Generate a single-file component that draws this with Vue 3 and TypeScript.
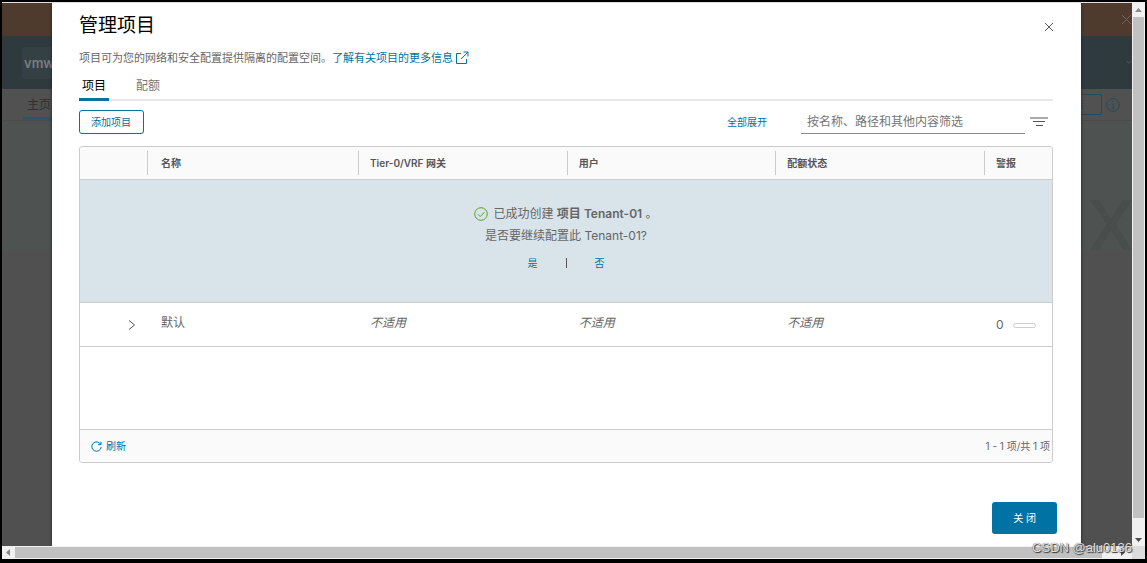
<script setup lang="ts">
import { ref } from 'vue'

interface Project {
  name: string
  gateway: string
  users: string
  quota: string
  alarms: number
}

const columns: string[] = ['名称', 'Tier-0/VRF 网关', '用户', '配额状态', '警报']
const projects: Project[] = [
  { name: '默认', gateway: '不适用', users: '不适用', quota: '不适用', alarms: 0 },
]
const tabs: string[] = ['项目', '配额']
const activeTab = ref<string>('项目')
const filterText = ref<string>('')
</script>

<template>
  <div class="screen">
    <div class="stage">
      <div class="backdrop" aria-hidden="true">
        <div class="banner">
          <svg class="banner-x" viewBox="0 0 12 12"><path d="M1 1l10 10M11 1L1 11" /></svg>
        </div>
        <div class="topbar">
          <span class="brand">vmw</span>
          <svg class="caret" viewBox="0 0 8 6"><path d="M1 1l3 3 3-3" /></svg>
        </div>
        <div class="nav">
          <span class="nav-tab">主页</span>
          <div class="nav-side">
            <span class="ghost">服务</span>
            <svg class="info" viewBox="0 0 14 14">
              <circle cx="7" cy="7" r="6.3" />
              <path d="M5.6 6h1.6v4M5.4 10.2h3.4M6.4 3.5h1.2" />
            </svg>
          </div>
        </div>
        <div class="hero">
          <svg class="hero-x" viewBox="0 0 42 50"><path d="M0 0h9l12 19L33 0h9L26 24l16 26h-9L21 30 9 50H0l17-26z" /></svg>
        </div>
      </div>

      <section class="modal" role="dialog" aria-labelledby="dlg-title">
        <header class="modal-head">
          <h1 id="dlg-title">管理项目</h1>
          <button class="icon-btn close" type="button" aria-label="关闭对话框">
            <svg width="10" height="10" viewBox="0 0 10 10"><path d="M1 1l8 8M9 1L1 9" /></svg>
          </button>
        </header>

        <p class="intro">
          <span>项目可为您的网络和安全配置提供隔离的配置空间。</span>
          <a href="#">了解有关项目的更多信息<svg width="14" height="14" viewBox="0 0 14 14"><path d="M6 2.5H1.5v10h10V8M8.5 1h4.5v4.5M13 1L6 8" /></svg></a>
        </p>

        <nav class="tabs" role="tablist">
          <button
            v-for="tab in tabs"
            :key="tab"
            type="button"
            role="tab"
            :class="['tab', { active: tab === activeTab }]"
            :aria-selected="tab === activeTab"
            @click="activeTab = tab"
          >{{ tab }}</button>
        </nav>

        <div class="tools">
          <button class="add" type="button">添加项目</button>
          <div class="tools-right">
            <button class="link" type="button">全部展开</button>
            <input v-model="filterText" class="filter" type="text" aria-label="筛选" placeholder="按名称、路径和其他内容筛选" />
            <button class="icon-btn funnel" type="button" aria-label="筛选选项">
              <svg width="18" height="10" viewBox="0 0 18 10"><path d="M0 1h18M3 4.5h12M6 8.5h7" /></svg>
            </button>
          </div>
        </div>

        <div class="grid">
          <table>
            <colgroup>
              <col class="c-exp" /><col class="c-name" /><col /><col /><col /><col class="c-alarm" />
            </colgroup>
            <thead>
              <tr>
                <td></td>
                <th v-for="c in columns" :key="c" scope="col"><span>{{ c }}</span></th>
              </tr>
            </thead>
            <tbody>
              <tr class="notice">
                <td colspan="6">
                  <div class="line">
                    <svg width="14" height="14" viewBox="0 0 14 14"><circle cx="7" cy="7" r="6.3" /><path d="M3.8 7.2l2.4 2.4 4.2-4.4" /></svg>
                    <span>已成功创建 <b>项目 Tenant-01</b> 。</span>
                  </div>
                  <div class="line">是否要继续配置此 Tenant-01?</div>
                  <div class="choices">
                    <button class="link" type="button">是</button>
                    <i></i>
                    <button class="link" type="button">否</button>
                  </div>
                </td>
              </tr>
              <tr v-for="p in projects" :key="p.name" class="row">
                <td class="exp">
                  <button class="icon-btn" type="button" aria-label="展开">
                    <svg width="8" height="12" viewBox="0 0 8 12"><path d="M1 1.5l5.5 4.5L1 10.5" /></svg>
                  </button>
                </td>
                <td class="name">{{ p.name }}</td>
                <td><em>{{ p.gateway }}</em></td>
                <td><em>{{ p.users }}</em></td>
                <td><em>{{ p.quota }}</em></td>
                <td class="alarm-cell"><div class="alarm">{{ p.alarms }}<span class="pill"></span></div></td>
              </tr>
            </tbody>
          </table>
          <footer class="grid-foot">
            <button class="link refresh" type="button">
              <svg width="11" height="11" viewBox="0 0 11 11"><path d="M9.7 3.4A4.7 4.7 0 1 0 10.2 6M10 .8v2.8H7.2" /></svg>刷新
            </button>
            <span>1 - 1 项/共 1 项</span>
          </footer>
        </div>

        <footer class="modal-foot">
          <button class="primary" type="button">关 闭</button>
        </footer>
      </section>
    </div>

    <div class="bar vertical">
      <svg class="arrow" viewBox="0 0 7 4"><path d="M0 4L3.5 0 7 4z" fill="#8a8a8a" /></svg>
      <div class="thumb"></div>
      <svg class="arrow" viewBox="0 0 7 4"><path d="M0 0h7L3.5 4z" fill="#505050" /></svg>
    </div>
    <div class="bar horizontal">
      <svg class="arrow" viewBox="0 0 4 7"><path d="M4 0v7L0 3.5z" fill="#8a8a8a" /></svg>
      <div class="thumb"></div>
      <svg class="arrow" viewBox="0 0 4 7"><path d="M0 0l4 3.5L0 7z" fill="#505050" /></svg>
    </div>
    <div class="corner"></div>
    <div class="watermark">CSDN @alu0136</div>
  </div>
</template>

<style>
body {
  margin: 0;
  background: #000;
}
</style>

<style scoped>
.screen {
  position: relative;
  box-sizing: border-box;
  display: grid;
  grid-template-columns: 1fr 13px;
  grid-template-rows: 1fr 13px;
  min-height: 100vh;
  padding: 2px 2px 4px;
  background: #000;
  color: #666;
  font-family: Inter, "Noto Sans CJK SC", sans-serif;
  font-size: 12px;
  line-height: 16px;
}
button {
  margin: 0;
  padding: 0;
  border: 0;
  background: none;
  font: inherit;
  color: inherit;
  cursor: pointer;
}
svg {
  flex: none;
  fill: none;
  stroke: currentColor;
}
.stage {
  position: relative;
  overflow: hidden;
  border-top: 1px solid #dedede;
  background: #505050;
}
.backdrop {
  position: absolute;
  inset: 0;
}
.banner {
  display: flex;
  align-items: center;
  justify-content: flex-end;
  height: 33px;
  background: #4e3b2e;
}
.banner-x {
  width: 11px;
  height: 11px;
  color: #706a66;
}
.topbar {
  display: flex;
  align-items: center;
  justify-content: space-between;
  height: 53px;
  padding-left: 20px;
  background: #2f3a3e;
}
.brand {
  width: 60px;
  padding: 8px 2px;
  border-radius: 3px;
  background: #344044;
  color: #777d80;
  font-size: 13px;
  font-weight: 600;
}
.caret {
  width: 6px;
  height: 5px;
  color: #586166;
}
.nav {
  display: flex;
  justify-content: space-between;
  box-sizing: border-box;
  height: 32px;
  padding-left: 21px;
  border-bottom: 1px solid #4a4a4a;
  background: #515151;
}
.nav-tab {
  box-sizing: border-box;
  width: 60px;
  padding: 8px 4px 0;
  border-bottom: 3px solid #2b5568;
  color: #303030;
}
.nav-side {
  display: flex;
  align-items: center;
  gap: 4px;
  padding-right: 12px;
}
.ghost {
  padding: 0 17px;
  border: 1px solid #264a5c;
  border-radius: 2px;
  color: #264a5c;
  font-size: 10px;
  line-height: 19px;
}
.info {
  width: 14px;
  height: 14px;
  color: #264a5c;
}
.hero {
  display: flex;
  align-items: flex-end;
  justify-content: flex-end;
  height: 129px;
  background: #4e5251;
}
.hero-x {
  width: 42px;
  height: 50px;
  color: #494d4c;
  fill: currentColor;
  stroke: none;
}
.modal {
  position: relative;
  box-sizing: border-box;
  display: flex;
  flex-direction: column;
  height: 100%;
  margin: 0 51px 0 50px;
  padding: 10px 28px 12px 27px;
  background: #fff;
  box-shadow: 0 0 3px #222;
}
.modal-head {
  display: flex;
  align-items: center;
  justify-content: space-between;
}
h1 {
  margin: 0;
  color: #000;
  font-size: 19px;
  font-weight: 400;
  line-height: 26px;
}
.icon-btn {
  display: flex;
  align-items: center;
  justify-content: center;
  width: 9px;
  height: 16px;
  color: #555;
}
.close {
  width: 8px;
  margin-top: 2px;
}
.intro {
  display: flex;
  margin: 11px 0 0;
  font-size: 11px;
}
a {
  display: flex;
  align-items: center;
  color: #0072a3;
  text-decoration: none;
}
a svg {
  margin-left: 2px;
}
.tabs {
  display: flex;
  gap: 24px;
  margin-top: 8px;
  box-shadow: inset 0 -2px #e8e8e8;
}
.tab {
  padding: 4px 3px;
  border-bottom: 3px solid transparent;
  color: #777;
  line-height: 16px;
}
.tab.active {
  border-color: #0072a3;
  color: #000;
}
.tools {
  display: flex;
  align-items: center;
  justify-content: space-between;
  margin: 9px 0 12px;
}
.add {
  padding: 2px 12px 2px 11px;
  border: 1px solid #0072a3;
  border-radius: 3px;
  color: #0072a3;
  font-size: 10px;
  line-height: 18px;
}
.link {
  color: #0072a3;
  font-size: 10px;
}
.tools-right {
  display: flex;
  align-items: center;
}
.filter {
  box-sizing: border-box;
  width: 224px;
  height: 24px;
  margin: 0 5px 0 34px;
  padding: 0 6px;
  border: 0;
  border-bottom: 1px solid #8c8c8c;
  outline: 0;
  background: none;
  color: #666;
  font: inherit;
}
.filter::placeholder {
  color: #757575;
}
.funnel {
  width: 18px;
  margin-right: 5px;
}
.grid {
  border: 1px solid #ccc;
  border-radius: 3px;
  overflow: hidden;
}
table {
  width: 100%;
  border-collapse: collapse;
  table-layout: fixed;
}
.c-exp {
  width: 67px;
}
.c-name {
  width: 211px;
}
.c-alarm {
  width: 68px;
}
thead {
  background: #fafafa;
}
thead td,
th {
  padding: 4px 0;
  border-bottom: 1px solid #ccc;
  text-align: left;
}
th span {
  display: block;
  padding-left: 11px;
  border-left: 1px solid #ccc;
  color: #565656;
  font-size: 10px;
  font-weight: 600;
  line-height: 24px;
}
th:first-of-type span {
  padding-left: 13px;
}
.notice td {
  padding: 23px 0 31px;
  background: #d9e4ea;
  text-align: center;
}
.line {
  display: flex;
  align-items: center;
  justify-content: center;
  gap: 5px;
  line-height: 22px;
}
.line svg {
  color: #5aa220;
}
b {
  font-weight: 600;
}
.choices {
  display: flex;
  align-items: center;
  justify-content: center;
  gap: 28px;
  margin-top: 8px;
}
.choices i {
  width: 1px;
  height: 10px;
  background: #565656;
}
.row td {
  padding: 12px 0 15px 12px;
  border-top: 1px solid #ccc;
  border-bottom: 1px solid #ccc;
}
.row .name {
  padding-left: 14px;
}
.row .exp {
  padding: 14px 11px 13px 0;
}
.row .alarm-cell {
  padding: 14px 0 13px 12px;
}
.exp .icon-btn {
  margin-left: auto;
}
.alarm {
  display: flex;
  align-items: center;
  gap: 9px;
}
.pill {
  width: 21px;
  height: 3px;
  border: 1px solid #ccc;
  border-radius: 3px;
}
.grid-foot {
  display: flex;
  align-items: center;
  justify-content: space-between;
  margin-top: 82px;
  padding: 8px 2px 8px 11px;
  border-top: 1px solid #ccc;
  background: #fafafa;
  font-size: 10px;
  line-height: 16px;
}
.refresh {
  display: flex;
  align-items: center;
  gap: 4px;
}
.modal-foot {
  display: flex;
  justify-content: flex-end;
  margin: auto -4px 0 0;
}
.primary {
  padding: 0 21px;
  border-radius: 3px;
  background: #0072a3;
  color: #fff;
  font-size: 10px;
  line-height: 32px;
}
.bar {
  display: flex;
  align-items: center;
  background: #f1f1f1;
}
.vertical {
  flex-direction: column;
  padding: 6px 0 4px;
  gap: 5px;
}
.vertical .thumb {
  flex: 1;
  width: 11px;
  margin-bottom: 15px;
}
.horizontal {
  padding: 0 7px 0 4px;
  gap: 5px;
}
.horizontal .thumb {
  flex: 1;
  height: 11px;
  margin-right: 14px;
}
.thumb {
  background: #c1c1c1;
}
.arrow {
  stroke: none;
}
.vertical .arrow {
  width: 7px;
  height: 4px;
}
.horizontal .arrow {
  width: 4px;
  height: 7px;
}
.corner {
  background: #dcdcdc;
}
.watermark {
  position: absolute;
  right: 15px;
  bottom: 7px;
  color: #ddd;
  font-family: "Liberation Sans", Arial, sans-serif;
  font-size: 13px;
  text-shadow: 1px 1px 1px #333, 0 0 1px #555;
}
</style>
